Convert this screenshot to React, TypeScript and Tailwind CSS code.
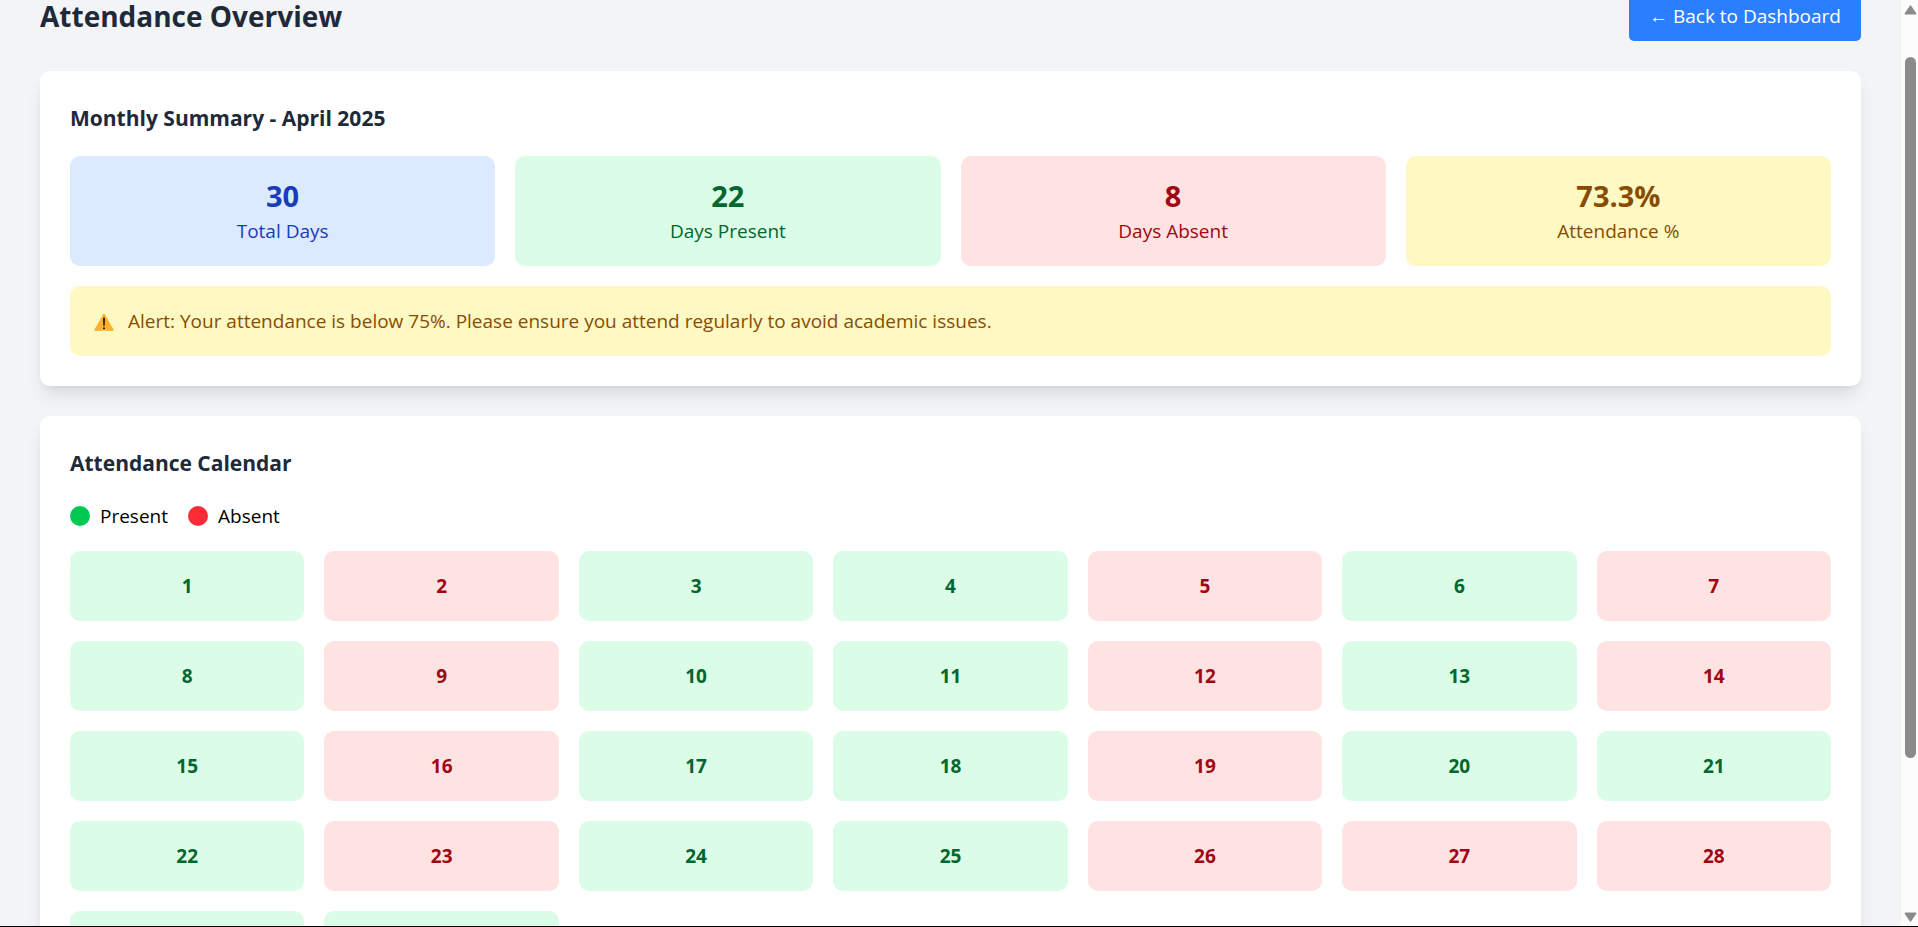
import { useLayoutEffect, useRef } from "react";
import clsx from "clsx";

const stats = [
  { value: "30", label: "Total Days", tone: "bg-blue-100 text-blue-800" },
  { value: "22", label: "Days Present", tone: "bg-green-100 text-green-800" },
  { value: "8", label: "Days Absent", tone: "bg-red-100 text-red-800" },
  { value: "73.3%", label: "Attendance %", tone: "bg-yellow-100 text-yellow-800" },
];

const legend = [
  { label: "Present", dot: "bg-green-500" },
  { label: "Absent", dot: "bg-red-500" },
];

const absentDays = new Set([2, 5, 7, 9, 12, 14, 16, 19, 23, 26, 27, 28]);
const days = Array.from({ length: 30 }, (_, i) => i + 1);

const card =
  "rounded-[10px] bg-white p-[30px] shadow-[0_12px_19px_-4px_rgba(0,0,0,0.1),0_5px_8px_-5px_rgba(0,0,0,0.1)]";
const cardTitle = "mb-5 text-[21px] leading-[35px] font-bold text-gray-800";

function WarningIcon() {
  return (
    <svg className="shrink-0" width="20" height="22" viewBox="0 0 20 22" aria-hidden="true">
      <path d="M10 4 19.3 20.2H.7Z" fill="#ffb02e" stroke="#ffb02e" strokeWidth="1.2" strokeLinejoin="round" />
      <path d="M9.1 8.4a.9 .9 0 0 1 1.8 0l-.2 6.9a.7 .7 0 0 1-1.4 0Z" fill="#1a1000" />
      <circle cx="10" cy="18.2" r="1" fill="#1a1000" />
    </svg>
  );
}

function ScrollRail() {
  return (
    <div className="flex w-[17px] shrink-0 flex-col items-center bg-[#fcfcfc] pt-[5px] pb-1 pl-[2px]" aria-hidden="true">
      <svg width="13" height="10" viewBox="0 0 13 10">
        <path d="M6.5 1.2 11.6 8.8H1.4Z" fill="#8b8b8b" stroke="#8b8b8b" strokeWidth="1.6" strokeLinejoin="round" />
      </svg>
      <div className="flex w-full grow flex-col items-center pt-[42px]">
        <div className="h-[82%] w-[11px] rounded-full bg-[#8b8b8b]" />
      </div>
      <svg width="13" height="10" viewBox="0 0 13 10">
        <path d="M6.5 8.8 11.6 1.2H1.4Z" fill="#8b8b8b" stroke="#8b8b8b" strokeWidth="1.6" strokeLinejoin="round" />
      </svg>
    </div>
  );
}

export default function App() {
  const scroller = useRef<HTMLDivElement>(null);

  useLayoutEffect(() => {
    if (scroller.current) scroller.current.scrollTop = 49;
  }, []);

  return (
    <div className="flex h-screen border-b border-black font-['Segoe_UI','Open_Sans',sans-serif] text-[19px] leading-[30px] text-black">
      <div ref={scroller} className="min-w-0 grow overflow-y-auto bg-gray-100 [scrollbar-width:none]">
        <main className="flex flex-col gap-[30px] p-10">
          <header className="flex items-center justify-between">
            <h1 className="text-[28px] leading-10 font-bold text-gray-800">Attendance Overview</h1>
            <button type="button" className="rounded-[5px] bg-blue-500 px-5 py-[10px] text-white">
              ← Back to Dashboard
            </button>
          </header>

          <section className={card}>
            <h2 className={cardTitle}>Monthly Summary - April 2025</h2>
            <div className="grid grid-cols-4 gap-5">
              {stats.map((s) => (
                <div key={s.label} className={clsx("rounded-[10px] p-5 text-center", s.tone)}>
                  <p className="text-[29px] leading-10 font-bold">{s.value}</p>
                  <p>{s.label}</p>
                </div>
              ))}
            </div>
            <div role="alert" className="mt-5 flex items-center gap-[14px] rounded-[10px] bg-yellow-100 px-6 py-5 text-yellow-800">
              <WarningIcon />
              <p>Alert: Your attendance is below 75%. Please ensure you attend regularly to avoid academic issues.</p>
            </div>
          </section>

          <section className={card}>
            <h2 className={cardTitle}>Attendance Calendar</h2>
            <ul className="mb-5 flex gap-5">
              {legend.map((l) => (
                <li key={l.label} className="flex items-center gap-[10px]">
                  <span className={clsx("size-5 rounded-full", l.dot)} />
                  <span>{l.label}</span>
                </li>
              ))}
            </ul>
            <div className="grid grid-cols-7 gap-5">
              {days.map((d) => (
                <div
                  key={d}
                  className={clsx(
                    "rounded-[10px] p-5 text-center font-bold",
                    absentDays.has(d) ? "bg-red-100 text-red-800" : "bg-green-100 text-green-800",
                  )}
                >
                  {d}
                </div>
              ))}
            </div>
          </section>
        </main>
      </div>
      <ScrollRail />
    </div>
  );
}
